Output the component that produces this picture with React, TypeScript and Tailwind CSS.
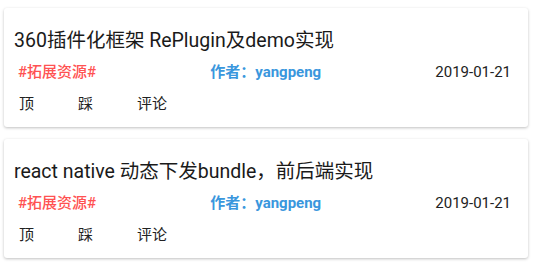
const posts = [
  { title: '360插件化框架 RePlugin及demo实现', tag: '#拓展资源#', author: 'yangpeng', date: '2019-01-21' },
  { title: 'react native 动态下发bundle，前后端实现', tag: '#拓展资源#', author: 'yangpeng', date: '2019-01-21' },
]

function PostCard({ post }: { post: (typeof posts)[number] }) {
  return (
    <div className="bg-white rounded-[3px] shadow-[0_1px_3px_rgba(0,0,0,0.25)] h-[119px] flex flex-col">
      <h3 className="pl-[10px] pt-[20px] text-[19.5px] leading-[26px] text-[#1a1a1a]">{post.title}</h3>
      <div className="mt-[8px] flex items-center justify-between pl-[14px] pr-[17px] text-[15px] leading-[20px]">
        <span className="text-[#ff5252] font-medium">{post.tag}</span>
        <span className="text-[#3a97dd] font-bold">作者：{post.author}</span>
        <span className="text-[#222]">{post.date}</span>
      </div>
      <div className="mt-[12px] flex pl-[15px] text-[15px] leading-[20px] text-[#222]">
        <span className="w-[59px]">顶</span>
        <span className="w-[59px]">踩</span>
        <span>评论</span>
      </div>
    </div>
  )
}

export default function App() {
  return (
    <div className="min-h-[262px] bg-white pl-[4px] pr-[5px] pt-[8px] flex flex-col gap-[12px] font-['Roboto','Noto_Sans_CJK_SC',sans-serif] w-[533px]">
      {posts.map((p, i) => (
        <PostCard key={i} post={p} />
      ))}
    </div>
  )
}
